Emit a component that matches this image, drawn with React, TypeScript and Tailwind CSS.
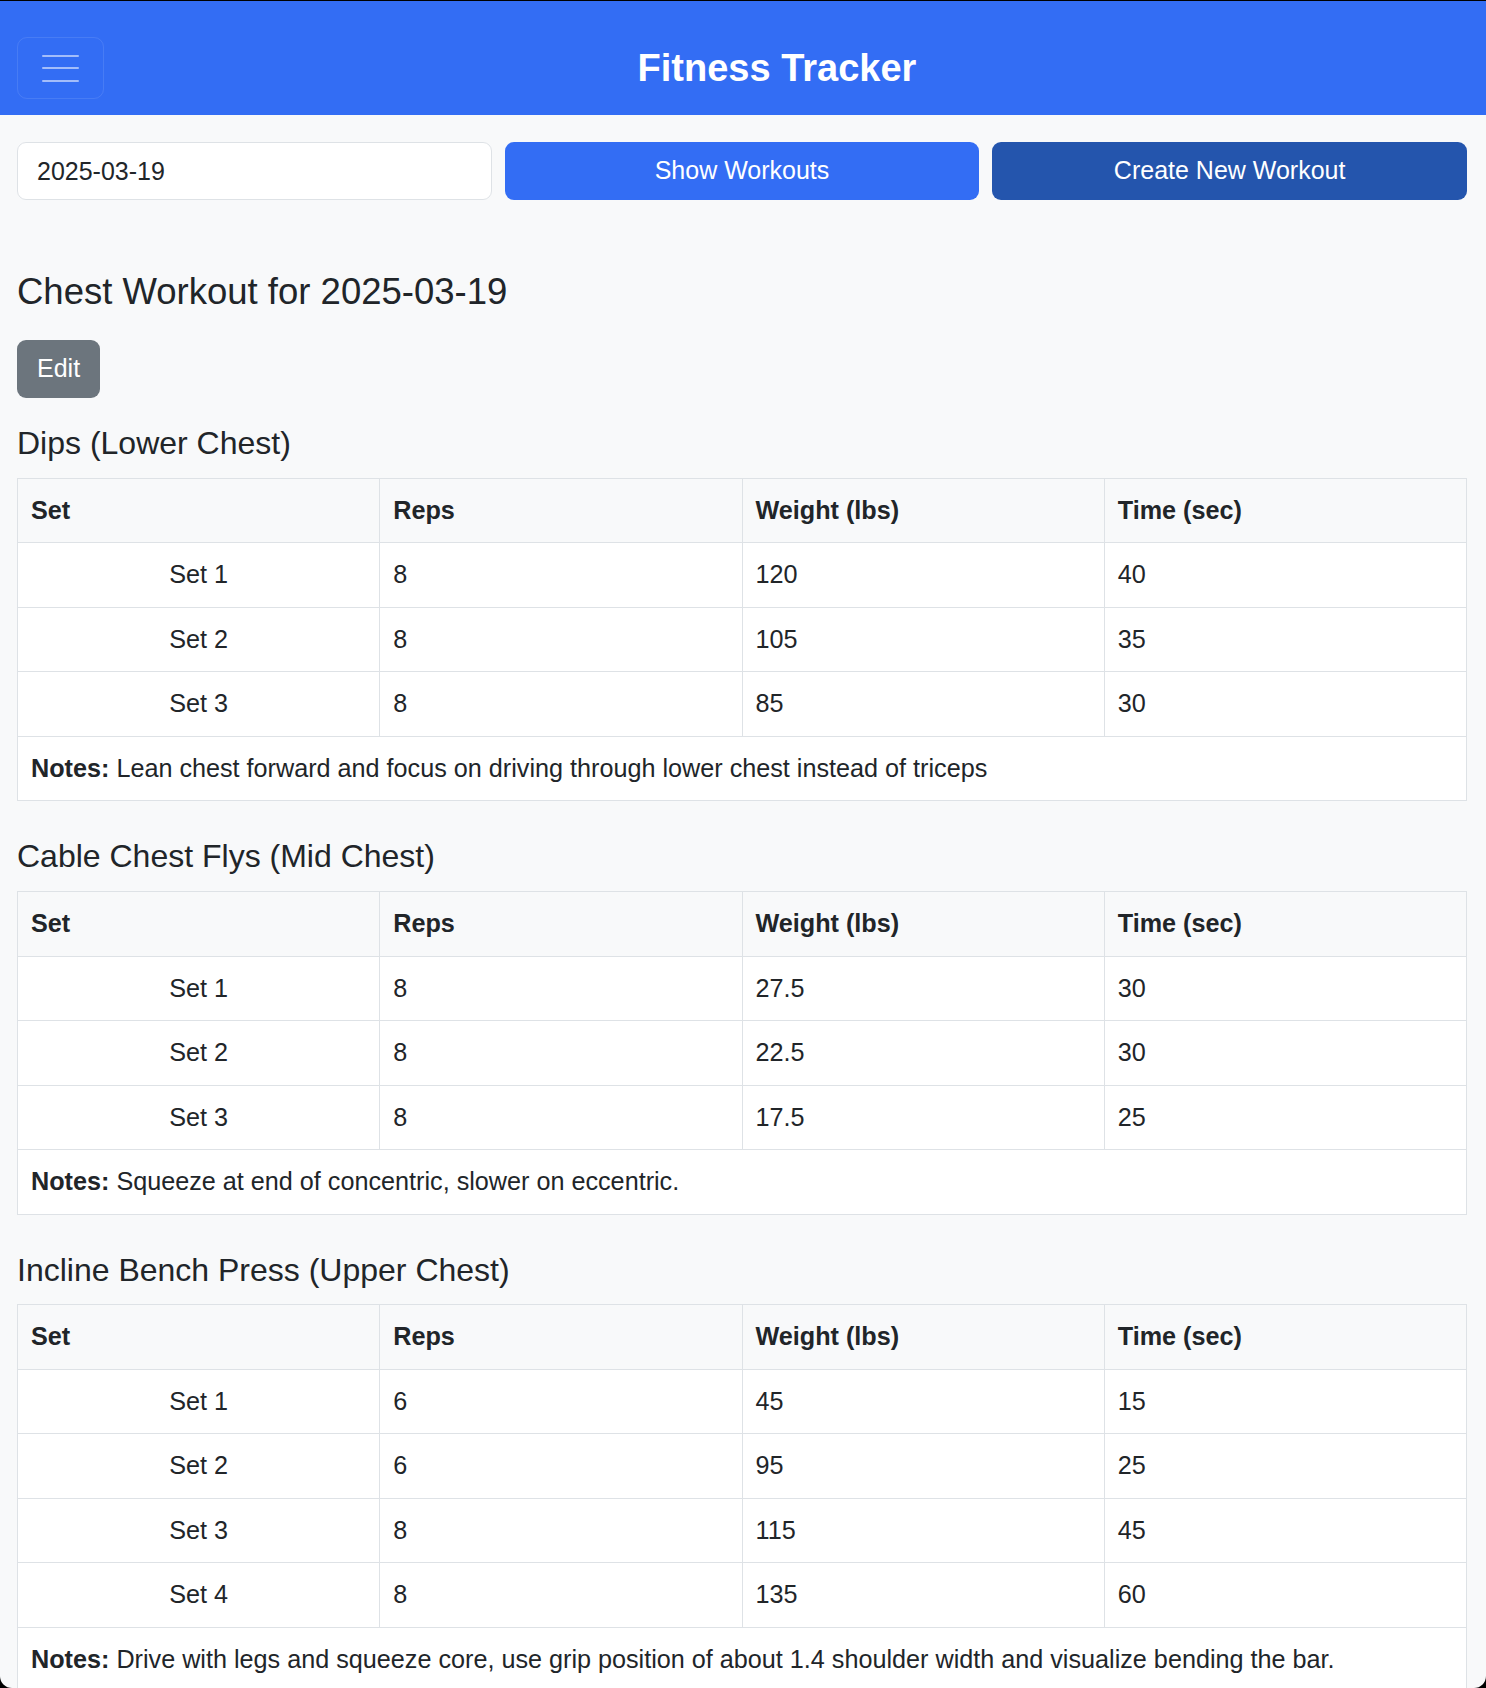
import React from 'react';

interface SetRow {
  reps: number;
  weight: string;
  time: number;
}

interface Exercise {
  name: string;
  sets: SetRow[];
  notes: string;
}

const EXERCISES: Exercise[] = [
  {
    name: 'Dips (Lower Chest)',
    sets: [
      { reps: 8, weight: '120', time: 40 },
      { reps: 8, weight: '105', time: 35 },
      { reps: 8, weight: '85', time: 30 },
    ],
    notes: 'Lean chest forward and focus on driving through lower chest instead of triceps',
  },
  {
    name: 'Cable Chest Flys (Mid Chest)',
    sets: [
      { reps: 8, weight: '27.5', time: 30 },
      { reps: 8, weight: '22.5', time: 30 },
      { reps: 8, weight: '17.5', time: 25 },
    ],
    notes: 'Squeeze at end of concentric, slower on eccentric.',
  },
  {
    name: 'Incline Bench Press (Upper Chest)',
    sets: [
      { reps: 6, weight: '45', time: 15 },
      { reps: 6, weight: '95', time: 25 },
      { reps: 8, weight: '115', time: 45 },
      { reps: 8, weight: '135', time: 60 },
    ],
    notes: 'Drive with legs and squeeze core, use grip position of about 1.4 shoulder width and visualize bending the bar.',
  },
];

const cell = 'border border-[#dee2e6] px-[13px] py-[13px] leading-[37.5px]';

const ExerciseTable: React.FC<{ exercise: Exercise }> = ({ exercise }) => (
  <section className="mb-[36px]">
    <h3 className="text-[32px] leading-[1.2] font-normal mb-[15.5px]">{exercise.name}</h3>
    <table className="w-full table-fixed border-collapse text-[25.2px]">
      <thead>
        <tr className="bg-[#f8f9fa]">
          <th className={`${cell} text-left font-bold`}>Set</th>
          <th className={`${cell} text-left font-bold`}>Reps</th>
          <th className={`${cell} text-left font-bold`}>Weight (lbs)</th>
          <th className={`${cell} text-left font-bold`}>Time (sec)</th>
        </tr>
      </thead>
      <tbody className="bg-white">
        {exercise.sets.map((s, i) => (
          <tr key={i}>
            <td className={`${cell} text-center`}>Set {i + 1}</td>
            <td className={cell}>{s.reps}</td>
            <td className={cell}>{s.weight}</td>
            <td className={cell}>{s.time}</td>
          </tr>
        ))}
        <tr>
          <td colSpan={4} className={cell}>
            <strong className="font-bold">Notes:</strong> {exercise.notes}
          </td>
        </tr>
      </tbody>
    </table>
  </section>
);

export default function App() {
  return (
    <div className="bg-black pt-px" style={{ fontFamily: '"Liberation Sans", Arial, sans-serif' }}>
      <div className="h-[1687px] overflow-hidden rounded-b-[12px] bg-[#f8f9fa] text-[#212529]">
        {/* Navbar */}
        <header className="flex h-[114px] items-start bg-[#336df4] pl-[17px] pr-[36px] pt-[36px]">
          <button className="flex h-[62px] w-[87px] flex-col items-center justify-center gap-[10.5px] rounded-[10px] border border-white/10">
            <span className="block h-[2px] w-[37px] rounded-full bg-white/55" />
            <span className="block h-[2px] w-[37px] rounded-full bg-white/55" />
            <span className="block h-[2px] w-[37px] rounded-full bg-white/55" />
          </button>
          <h1 className="flex h-[62px] flex-1 items-center justify-center text-[38px] font-bold text-white">
            Fitness Tracker
          </h1>
        </header>

        <main className="pl-[17px] pr-[19px]">
          {/* Controls */}
          <div className="mt-[27px] grid grid-cols-3 gap-[13px]">
            <input
              type="text"
              defaultValue="2025-03-19"
              className="h-[58px] rounded-[9px] border border-[#dee2e6] bg-white pl-[19px] text-[25px] text-[#212529] outline-none"
            />
            <button className="h-[58px] rounded-[9px] bg-[#336df4] text-[25px] text-white">Show Workouts</button>
            <button className="h-[58px] rounded-[9px] bg-[#2455ad] text-[25px] text-white">Create New Workout</button>
          </div>

          <h2 className="mt-[70px] text-[36.5px] leading-[1.2] font-normal">Chest Workout for 2025-03-19</h2>
          <button className="mt-[26px] h-[58px] rounded-[9px] bg-[#6c757d] px-[20px] text-[25px] text-white">Edit</button>

          <div className="mt-[26px]">
            {EXERCISES.map((ex) => (
              <ExerciseTable key={ex.name} exercise={ex} />
            ))}
          </div>
        </main>
      </div>
    </div>
  );
}
